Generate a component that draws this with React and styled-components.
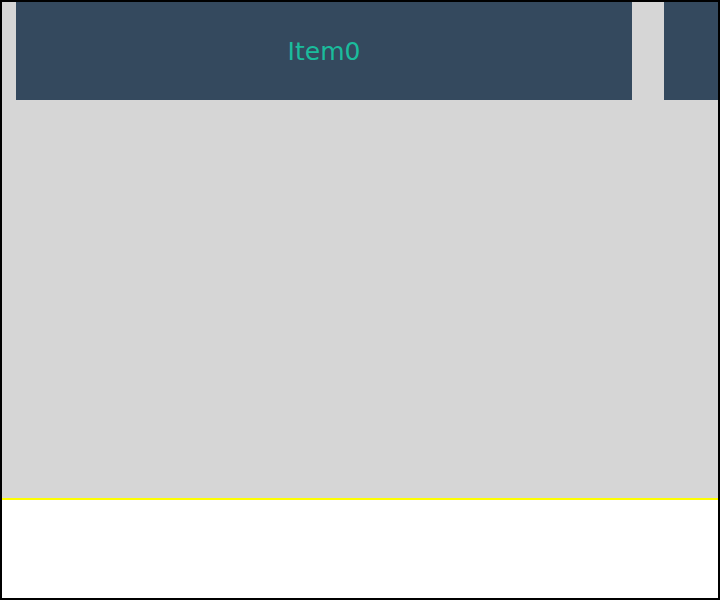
import React from "react";
import styled, { createGlobalStyle } from "styled-components";

const GlobalStyle = createGlobalStyle`
  html, body {
    margin: 0;
    padding: 0;
    background: #ffffff;
  }
  body {
    font-family: "DejaVu Sans", sans-serif;
  }
`;

const Frame = styled.div`
  box-sizing: border-box;
  width: 720px;
  height: 600px;
  border: 2px solid #000;
  display: flex;
  flex-direction: column;
  background: #fff;
`;

const Track = styled.div`
  height: 496px;
  background: #d6d6d6;
  border-bottom: 2px solid #ffff00;
  display: flex;
  align-items: flex-start;
  gap: 32px;
  padding-left: 14px;
  overflow: hidden;
`;

const Slide = styled.div`
  flex: 0 0 616px;
  height: 98px;
  background: #34495e;
  color: #1abc9c;
  font-size: 25px;
  display: flex;
  align-items: center;
  justify-content: center;
  white-space: nowrap;
`;

const items = ["Item0", "Item1", "Item2"];

export default function App() {
  return (
    <>
      <GlobalStyle />
      <Frame>
        <Track>
          {items.map((item) => (
            <Slide key={item}>{item}</Slide>
          ))}
        </Track>
      </Frame>
    </>
  );
}
